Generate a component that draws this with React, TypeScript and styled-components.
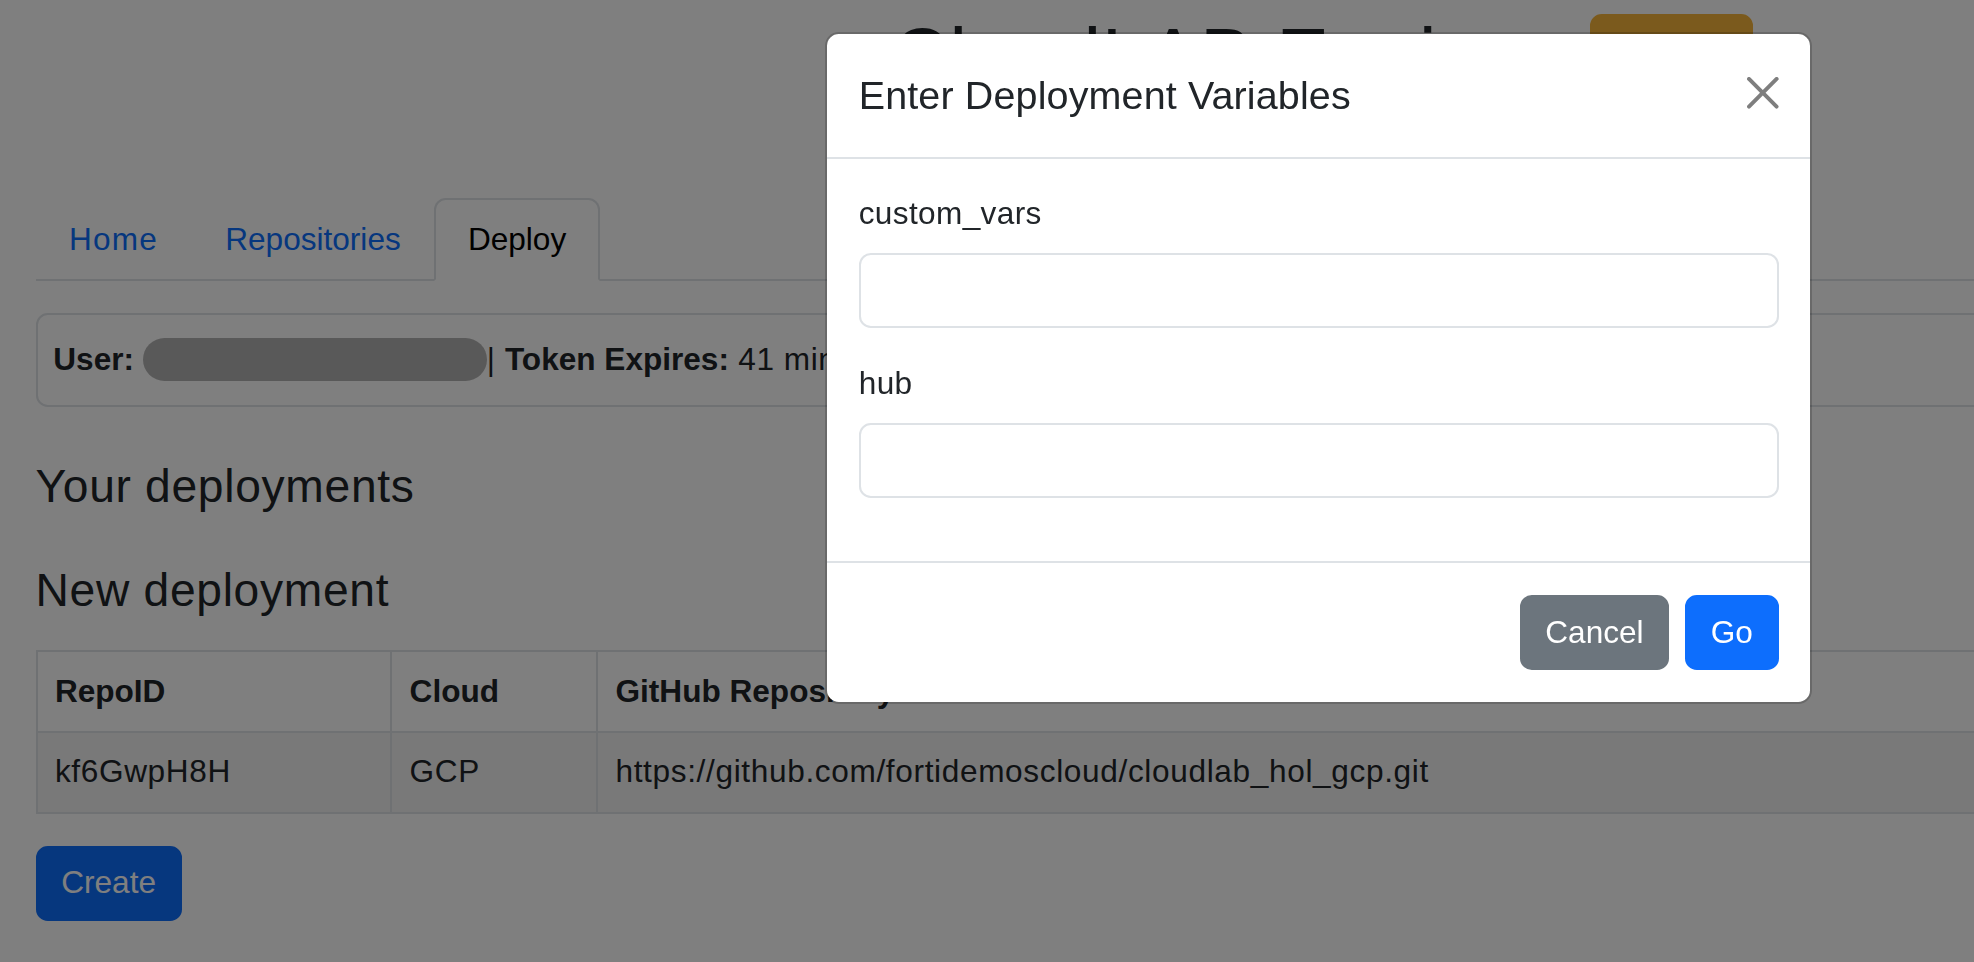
import React from "react";
import styled, { createGlobalStyle, css } from "styled-components";

const S = 1.974;
const u = (...ns: number[]) => ns.map((n) => `${+(n * S).toFixed(2)}px`).join(" ");
const LINE = "2px";

const GlobalStyle = createGlobalStyle`
  html, body {
    margin: 0;
    padding: 0;
    background: #ffffff;
    overflow: hidden;
    height: 100%;
  }
  body {
    font-family: "Liberation Sans", Arial, Helvetica, sans-serif;
    font-size: ${u(16)};
    line-height: 1.5;
    letter-spacing: ${u(0.28)};
    color: #212529;
  }
  strong { letter-spacing: 0; }
  * { box-sizing: border-box; }
`;

const Page = styled.div`
  width: ${u(1200)};
  padding-left: ${u(18)};
`;

const Header = styled.header`
  display: flex;
  align-items: flex-start;
  padding-left: ${u(433.7)};
  margin-bottom: ${u(47.3)};
`;

const AppTitle = styled.h1`
  margin: ${u(5)} 0 0;
  font-size: ${u(40)};
  font-weight: 500;
  line-height: 1.2;
  letter-spacing: ${u(0.4)};
  color: #212529;
`;

type Variant = "primary" | "secondary" | "warning";

const variantColors: Record<Variant, { bg: string; fg: string }> = {
  primary: { bg: "#0d6efd", fg: "#ffffff" },
  secondary: { bg: "#6c757d", fg: "#ffffff" },
  warning: { bg: "#f6b53a", fg: "#212529" },
};

const Button = styled.button<{ $variant: Variant; $gap?: number }>`
  display: inline-block;
  padding: ${u(6, 12)};
  margin: ${(p) => (p.$gap !== undefined ? u(p.$gap) : 0)};
  border: ${LINE} solid ${(p) => variantColors[p.$variant].bg};
  border-radius: ${u(6)};
  background: ${(p) => variantColors[p.$variant].bg};
  color: ${(p) => variantColors[p.$variant].fg};
  font-family: inherit;
  font-size: ${u(16)};
  line-height: ${u(24)};
  letter-spacing: 0;
  cursor: pointer;
`;

const HeaderButton = styled(Button)`
  margin-top: ${u(7)};
  margin-left: ${u(31.8)};
  padding: ${u(6, 13.6)};
`;

const Tabs = styled.ul`
  display: flex;
  list-style: none;
  margin: 0;
  padding: 0;
  border-bottom: ${LINE} solid #dee2e6;
`;

const TabItem = styled.li`
  display: block;
`;

const TabLink = styled.a<{ $active?: boolean; $tracking: number }>`
  display: block;
  padding: ${u(8, 16)};
  margin-bottom: -${LINE};
  border: ${LINE} solid transparent;
  border-top-left-radius: ${u(6)};
  border-top-right-radius: ${u(6)};
  color: #0d6efd;
  text-decoration: none;
  line-height: ${u(24)};
  letter-spacing: ${(p) => u(p.$tracking)};
  ${(p) =>
    p.$active &&
    css`
      color: #000000;
      background: #ffffff;
      border-color: #dee2e6 #dee2e6 #ffffff;
    `}
`;

const UserBox = styled.div`
  margin-top: ${u(16.1)};
  margin-bottom: ${u(25.9)};
  padding: ${u(11, 8)};
  border: ${LINE} solid #dee2e6;
  border-radius: ${u(6)};
  line-height: ${u(24)};
  white-space: nowrap;
  overflow: hidden;
`;

const Redacted = styled.span`
  display: inline-block;
  width: ${u(174)};
  height: ${u(21.6)};
  border-radius: ${u(11)};
  background: #b3b3b3;
  vertical-align: ${u(-5.4)};
`;

const SectionTitle = styled.h4<{ $mb: number }>`
  margin: 0 0 ${(p) => u(p.$mb)};
  font-size: ${u(23.4)};
  font-weight: 500;
  line-height: 1.2;
  letter-spacing: ${u(0.35)};
  color: #212529;
`;

const Table = styled.table`
  width: 100%;
  table-layout: fixed;
  border-collapse: collapse;
  margin-bottom: ${u(16.2)};
`;

const cellBase = css`
  padding: ${u(8)} ${u(8)} ${u(8)} ${u(8.8)};
  border: ${LINE} solid #dee2e6;
  text-align: left;
  line-height: ${u(24)};
  white-space: nowrap;
`;

const HeadCell = styled.th`
  ${cellBase};
  font-weight: 700;
  letter-spacing: 0;
`;

const BodyCell = styled.td`
  ${cellBase};
  letter-spacing: ${u(0.33)};
  background: rgba(0, 0, 0, 0.05);
`;

const Backdrop = styled.div`
  position: fixed;
  inset: 0;
  background: rgba(0, 0, 0, 0.5);
  z-index: 10;
`;

const ModalDialog = styled.div`
  position: fixed;
  left: ${u(418)};
  top: ${u(16.4)};
  width: ${u(500)};
  z-index: 11;
`;

const ModalContent = styled.div`
  display: flex;
  flex-direction: column;
  background: #ffffff;
  background-clip: padding-box;
  border: ${LINE} solid rgba(0, 0, 0, 0.175);
  border-radius: ${u(7)};
`;

const ModalHeader = styled.div`
  display: flex;
  align-items: center;
  padding: ${u(16)};
  border-bottom: ${LINE} solid #dee2e6;
`;

const ModalTitle = styled.h5`
  margin: 0;
  font-size: ${u(20)};
  font-weight: 500;
  line-height: 1.5;
  letter-spacing: ${u(0.07)};
  color: #212529;
`;

const CloseButton = styled.button`
  display: flex;
  align-items: center;
  justify-content: center;
  width: ${u(24)};
  height: ${u(24)};
  padding: ${u(4)};
  margin: ${u(-2.6)} ${u(-4)} 0 auto;
  border: 0;
  background: transparent;
  opacity: 0.5;
  cursor: pointer;
  svg {
    width: ${u(16)};
    height: ${u(16)};
    display: block;
  }
`;

const ModalBody = styled.div`
  padding: ${u(16)};
`;

const FormGroup = styled.div`
  margin-bottom: ${u(16)};
`;

const Label = styled.label`
  display: block;
  margin-bottom: ${u(8)};
  line-height: ${u(24)};
  letter-spacing: ${u(0.18)};
`;

const Input = styled.input`
  display: block;
  width: 100%;
  height: ${u(38)};
  padding: ${u(6, 12)};
  border: ${LINE} solid #dee2e6;
  border-radius: ${u(6)};
  font-family: inherit;
  font-size: ${u(16)};
  line-height: ${u(24)};
  color: #212529;
  background: #ffffff;
  outline: none;
`;

const ModalFooter = styled.div`
  display: flex;
  justify-content: flex-end;
  align-items: center;
  padding: ${u(12)};
  border-top: ${LINE} solid #dee2e6;
`;

const CloseIcon = () => (
  <svg viewBox="0 0 16 16" aria-hidden="true">
    <path
      fill="#000"
      d="M.293.293a1 1 0 0 1 1.414 0L8 6.586 14.293.293a1 1 0 1 1 1.414 1.414L9.414 8l6.293 6.293a1 1 0 0 1-1.414 1.414L8 9.414l-6.293 6.293a1 1 0 0 1-1.414-1.414L6.586 8 .293 1.707a1 1 0 0 1 0-1.414z"
    />
  </svg>
);

const tabs = [
  { label: "Home", active: false, tracking: 0.6 },
  { label: "Repositories", active: false, tracking: 0 },
  { label: "Deploy", active: true, tracking: 0 },
];

const fields = ["custom_vars", "hub"];

export default function App() {
  return (
    <>
      <GlobalStyle />
      <Page>
        <Header>
          <AppTitle>CloudLAB Engine</AppTitle>
          <HeaderButton $variant="warning">Log out</HeaderButton>
        </Header>

        <Tabs>
          {tabs.map((t) => (
            <TabItem key={t.label}>
              <TabLink href="#" $active={t.active} $tracking={t.tracking}>
                {t.label}
              </TabLink>
            </TabItem>
          ))}
        </Tabs>

        <UserBox>
          <strong>User:</strong> <Redacted />| <strong>Token Expires:</strong> 41 minutes
        </UserBox>

        <SectionTitle $mb={24.6}>Your deployments</SectionTitle>
        <SectionTitle $mb={16.1}>New deployment</SectionTitle>

        <Table>
          <colgroup>
            <col style={{ width: u(179.7) }} />
            <col style={{ width: u(104.3) }} />
            <col />
          </colgroup>
          <thead>
            <tr>
              <HeadCell>RepoID</HeadCell>
              <HeadCell>Cloud</HeadCell>
              <HeadCell>GitHub Repository</HeadCell>
            </tr>
          </thead>
          <tbody>
            <tr>
              <BodyCell>kf6GwpH8H</BodyCell>
              <BodyCell>GCP</BodyCell>
              <BodyCell>https://github.com/fortidemoscloud/cloudlab_hol_gcp.git</BodyCell>
            </tr>
          </tbody>
        </Table>

        <Button $variant="primary">Create</Button>
      </Page>

      <Backdrop />
      <ModalDialog role="dialog">
        <ModalContent>
          <ModalHeader>
            <ModalTitle>Enter Deployment Variables</ModalTitle>
            <CloseButton aria-label="Close">
              <CloseIcon />
            </CloseButton>
          </ModalHeader>
          <ModalBody>
            {fields.map((f) => (
              <FormGroup key={f}>
                <Label htmlFor={f}>{f}</Label>
                <Input id={f} type="text" />
              </FormGroup>
            ))}
          </ModalBody>
          <ModalFooter>
            <Button $variant="secondary" $gap={4}>
              Cancel
            </Button>
            <Button $variant="primary" $gap={4}>
              Go
            </Button>
          </ModalFooter>
        </ModalContent>
      </ModalDialog>
    </>
  );
}
